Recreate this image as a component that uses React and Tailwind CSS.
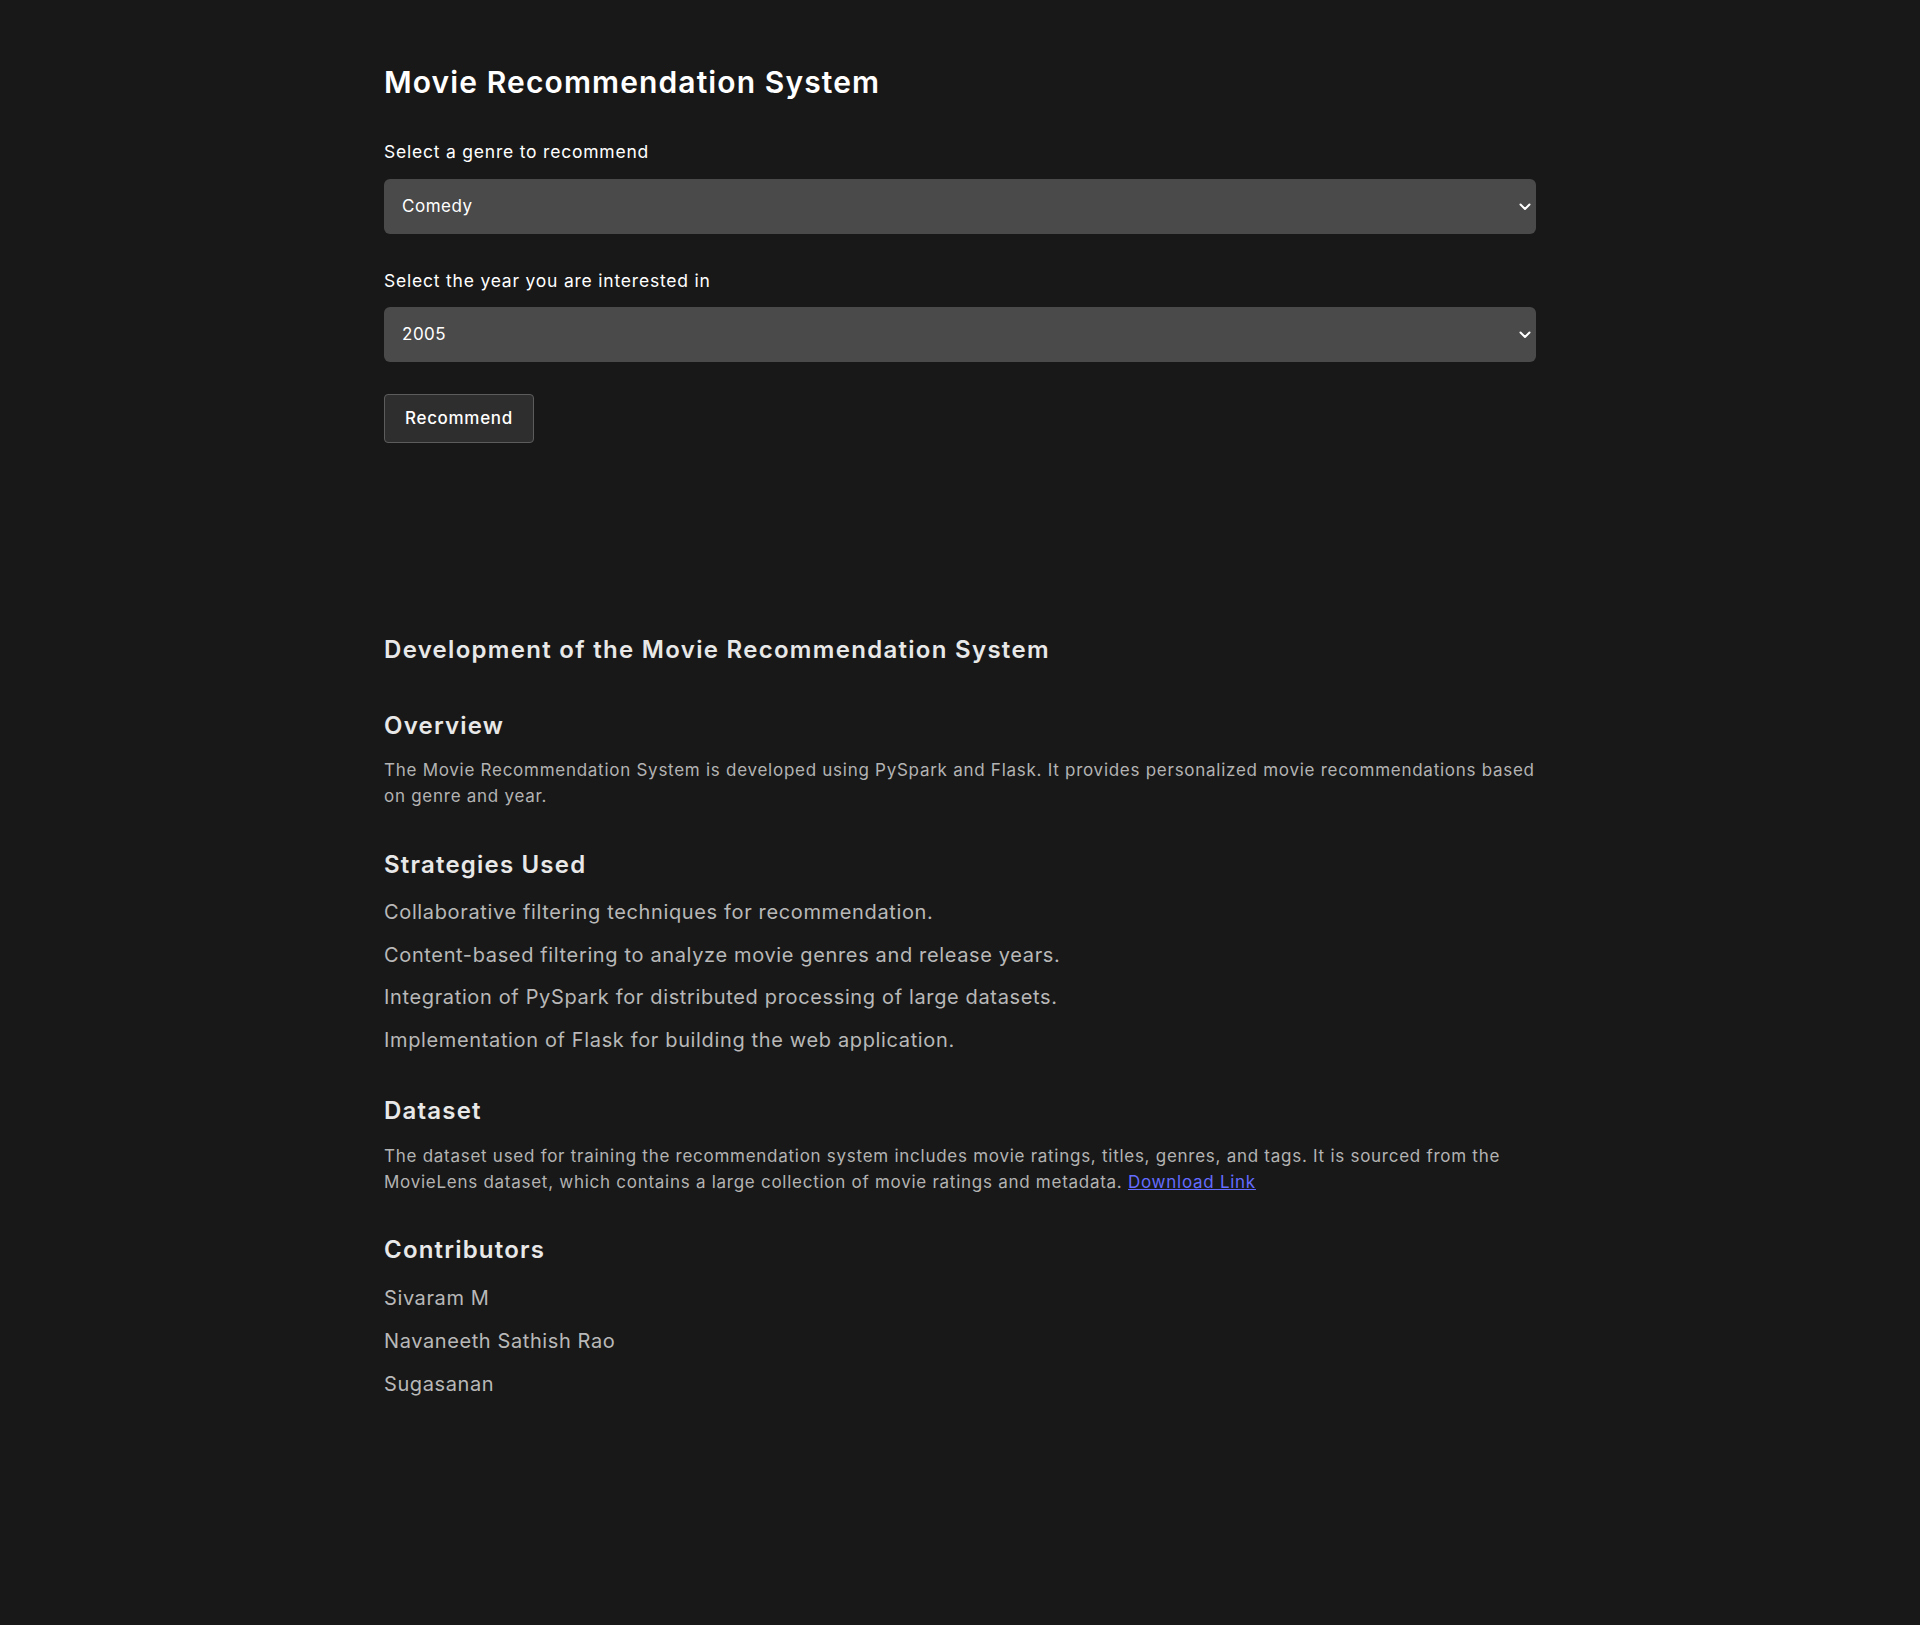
import React from "react";

function Chevron() {
  return (
    <svg
      className="pointer-events-none absolute right-[5px] top-1/2 -translate-y-1/2"
      width="12"
      height="8"
      viewBox="0 0 12 8"
      fill="none"
    >
      <path d="M1.5 1.5L6 6L10.5 1.5" stroke="#ffffff" strokeWidth="2" strokeLinecap="round" strokeLinejoin="round" />
    </svg>
  );
}

function Select({ value, options }) {
  return (
    <div className="relative h-[55px] w-full">
      <select
        defaultValue={value}
        className="h-full w-full appearance-none rounded-[6px] bg-[#4a4a4a] pl-[18px] text-[17px] tracking-[0.03em] text-white outline-none"
      >
        {options.map((o) => (
          <option key={o} value={o}>
            {o}
          </option>
        ))}
      </select>
      <Chevron />
    </div>
  );
}

export default function App() {
  const strategies = [
    "Collaborative filtering techniques for recommendation.",
    "Content-based filtering to analyze movie genres and release years.",
    "Integration of PySpark for distributed processing of large datasets.",
    "Implementation of Flask for building the web application.",
  ];
  const contributors = ["Sivaram M", "Navaneeth Sathish Rao", "Sugasanan"];
  return (
    <div className="min-h-[1625px] w-full bg-[#181818] font-['Inter','Noto_Sans',sans-serif]">
      <div className="mx-auto flex w-[1152px] flex-col pt-[64px]">
        <h1 className="text-[30px] font-semibold leading-[36px] tracking-[0.037em] text-white">
          Movie Recommendation System
        </h1>

        <label className="mt-[40px] text-[17.5px] leading-[24px] tracking-[0.045em] text-white">
          Select a genre to recommend
        </label>
        <div className="mt-[15px]">
          <Select value="Comedy" options={["Action", "Comedy", "Drama", "Horror", "Romance", "Thriller"]} />
        </div>

        <label className="mt-[35px] text-[17.5px] leading-[24px] tracking-[0.045em] text-white">
          Select the year you are interested in
        </label>
        <div className="mt-[14px]">
          <Select value="2005" options={["2003", "2004", "2005", "2006", "2007"]} />
        </div>

        <div className="mt-[32px]">
          <button className="h-[49px] rounded-[4px] border border-[#5c5c5c] bg-[#2e2e2e] px-[20px] text-[17px] font-medium tracking-[0.04em] text-white">
            Recommend
          </button>
        </div>

        <h2 className="mt-[191px] text-[24px] font-semibold leading-[32px] tracking-[0.054em] text-[#e8e8e8]">
          Development of the Movie Recommendation System
        </h2>

        <h3 className="mt-[44px] text-[24px] font-semibold leading-[32px] tracking-[0.05em] text-[#e8e8e8]">
          Overview
        </h3>
        <p className="mt-[15px] text-[17px] leading-[26px] tracking-[0.043em] text-[#b3b3b3]">
          The Movie Recommendation System is developed using PySpark and Flask. It provides personalized movie
          recommendations based on genre and year.
        </p>

        <h3 className="mt-[40px] text-[24px] font-semibold leading-[32px] tracking-[0.05em] text-[#e8e8e8]">
          Strategies Used
        </h3>
        <ul className="mt-[15px] flex flex-col gap-[10.7px]">
          {strategies.map((s) => (
            <li key={s} className="text-[20px] leading-[32px] tracking-[0.032em] text-[#b8b8b8]">
              {s}
            </li>
          ))}
        </ul>

        <h3 className="mt-[39px] text-[24px] font-semibold leading-[32px] tracking-[0.05em] text-[#e8e8e8]">
          Dataset
        </h3>
        <p className="mt-[16px] text-[17px] leading-[26px] tracking-[0.043em] text-[#b3b3b3]">
          The dataset used for training the recommendation system includes movie ratings, titles, genres, and tags.
          It is sourced from the MovieLens dataset, which contains a large collection of movie ratings and metadata.{" "}
          <a href="#" className="text-[#646cff] underline">
            Download Link
          </a>
        </p>

        <h3 className="mt-[39px] text-[24px] font-semibold leading-[32px] tracking-[0.05em] text-[#e8e8e8]">
          Contributors
        </h3>
        <ul className="mt-[16px] flex flex-col gap-[10.9px]">
          {contributors.map((c) => (
            <li key={c} className="text-[20px] leading-[32px] tracking-[0.03em] text-[#b8b8b8]">
              {c}
            </li>
          ))}
        </ul>
      </div>
    </div>
  );
}
